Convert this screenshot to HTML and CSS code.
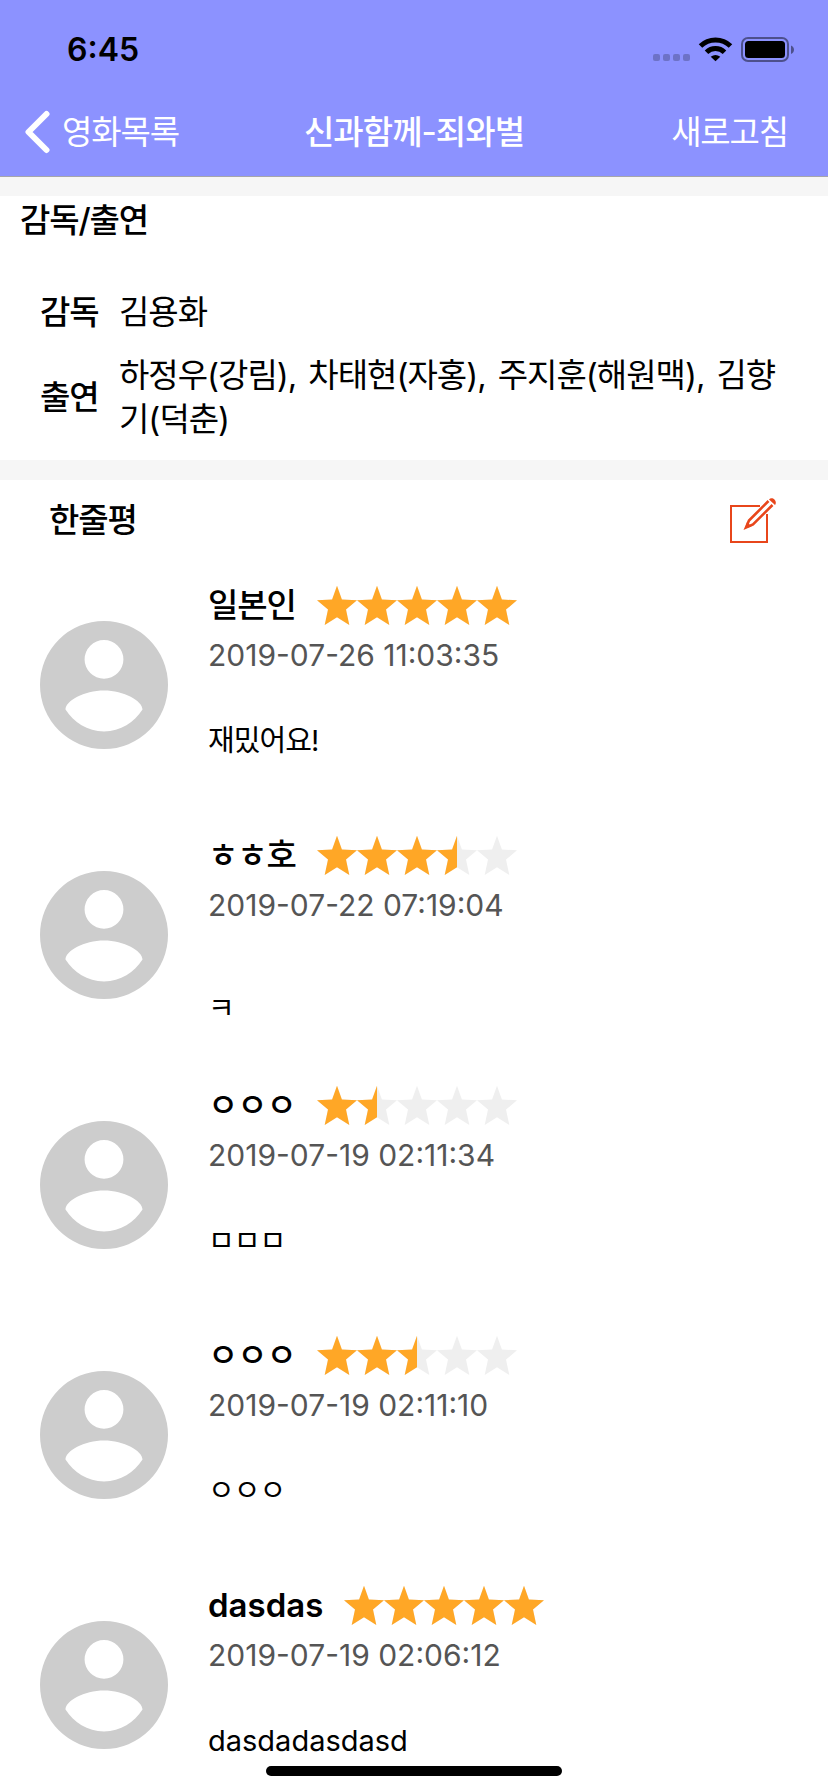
FILE: index.html
```
<!DOCTYPE html>
<html lang="ko">
<head>
<meta charset="utf-8">
<title>신과함께-죄와벌</title>
<link rel="stylesheet" href="styles.css">
</head>
<body>
<svg class="defs" width="0" height="0" aria-hidden="true">
  <defs>
    <path id="star" d="M20 .7 24.9 14.4 40 15.3 29 24.6 32.3 40 20 32.3 7.7 40 11 24.6 0 15.3 15.1 14.4Z"/>
    <g id="stars">
      <use href="#star"/><use href="#star" x="40"/><use href="#star" x="80"/><use href="#star" x="120"/><use href="#star" x="160"/>
    </g>
    <symbol id="person" viewBox="0 0 128 128">
      <path fill="#cdcdcd" fill-rule="evenodd" d="M64 0a64 64 0 1 1 0 128a64 64 0 1 1 0-128ZM64 19a19.4 19.4 0 1 0 0 38.800a19.400 19.400 0 1 0 0-38.800ZM64 69.500C44 69.500 25.500 80 25.500 88.500C33.500 101 47.500 110.500 64 110.500S94.500 101 102.500 88.500C102.500 80 84 69.500 64 69.500Z"/>
    </symbol>
  </defs>
</svg>
<div class="screen">
  <header class="top">
    <div class="status">
      <span class="clock">6:45</span>
      <svg class="indicators" width="142" height="26" viewBox="0 0 142 26">
        <g fill="#000" fill-opacity=".22"><rect y="17" width="7" height="7" rx="2"/><rect x="10" y="17" width="7" height="7" rx="2"/><rect x="20" y="17" width="7" height="7" rx="2"/><rect x="30" y="17" width="7" height="7" rx="2"/></g>
        <g fill="none" stroke="#000" stroke-width="5"><path d="M47.500 9A21.500 21.500 0 0 1 77.500 9"/><path d="M53.500 15.200A12.800 12.800 0 0 1 71.500 15.200"/></g>
        <path d="M57.700 19.800Q62.500 16 67.300 19.800L62.500 24.300Z"/>
        <rect x="89" y="1" width="46" height="23" rx="6" fill="none" stroke="#000" stroke-opacity=".45" stroke-width="2"/>
        <rect x="92" y="4" width="40" height="17" rx="3.500"/>
        <path fill-opacity=".45" d="M138 8.500C142 10 142 15.500 138 17Z"/>
      </svg>
    </div>
    <nav class="nav">
      <a class="back"><svg width="26" height="44" viewBox="0 0 26 44"><path d="M22.500 4 4.500 22 22.500 40" fill="none" stroke="#fff" stroke-width="6" stroke-linecap="round" stroke-linejoin="round"/></svg><span>영화목록</span></a>
      <h1 class="title">신과함께-죄와벌</h1>
      <a class="refresh">새로고침</a>
    </nav>
  </header>
  <main>
    <section class="cast">
      <h2 class="cast-title">감독/출연</h2>
      <dl class="credits">
        <dt>감독</dt><dd>김용화</dd>
        <dt>출연</dt><dd>하정우(강림), 차태현(자홍), 주지훈(해원맥), 김향기(덕춘)</dd>
      </dl>
    </section>
    <section class="reviews">
      <div class="reviews-head">
        <h2>한줄평</h2>
        <svg width="48" height="48" viewBox="0 0 48 48" fill="none" stroke="#e8461b">
          <path d="M31 10H2V46H38V18" stroke-width="2"/>
          <path d="M39.500 5 20 24.500 17 31.500 24 28.500 43.500 9" stroke-width="2.600"/>
          <path d="M16 32.500 18 26 22.500 30.500Z" fill="#e8461b" stroke="none"/>
          <path d="M40 3.500C43 0 49 5 46 9Z" fill="#e8461b" stroke="none"/>
        </svg>
      </div>
      <article class="review">
        <svg class="avatar"><use href="#person"/></svg>
        <div class="body">
          <div class="line"><h3>일본인</h3><svg class="rating"><use href="#stars" class="off"/><svg width="200"><use href="#stars" class="on"/></svg></svg></div>
          <time>2019-07-26 11:03:35</time>
          <p>재밌어요!</p>
        </div>
      </article>
      <article class="review">
        <svg class="avatar"><use href="#person"/></svg>
        <div class="body">
          <div class="line"><h3>ㅎㅎ호</h3><svg class="rating"><use href="#stars" class="off"/><svg width="140"><use href="#stars" class="on"/></svg></svg></div>
          <time>2019-07-22 07:19:04</time>
          <p><br>ㅋ</p>
        </div>
      </article>
      <article class="review">
        <svg class="avatar"><use href="#person"/></svg>
        <div class="body">
          <div class="line"><h3>ㅇㅇㅇ</h3><svg class="rating"><use href="#stars" class="off"/><svg width="60"><use href="#stars" class="on"/></svg></svg></div>
          <time>2019-07-19 02:11:34</time>
          <p>ㅁㅁㅁ</p>
        </div>
      </article>
      <article class="review">
        <svg class="avatar"><use href="#person"/></svg>
        <div class="body">
          <div class="line"><h3>ㅇㅇㅇ</h3><svg class="rating"><use href="#stars" class="off"/><svg width="100"><use href="#stars" class="on"/></svg></svg></div>
          <time>2019-07-19 02:11:10</time>
          <p>ㅇㅇㅇ</p>
        </div>
      </article>
      <article class="review">
        <svg class="avatar"><use href="#person"/></svg>
        <div class="body">
          <div class="line"><h3 class="latin">dasdas</h3><svg class="rating"><use href="#stars" class="off"/><svg width="200"><use href="#stars" class="on"/></svg></svg></div>
          <time>2019-07-19 02:06:12</time>
          <p class="latin">dasdadasdasd</p>
        </div>
      </article>
    </section>
  </main>
  <div class="home-bar"></div>
</div>
</body>
</html>
```
FILE: styles.css
```
* { box-sizing: border-box; margin: 0; padding: 0; }
body { background: #fff; color: #000; font-family: Inter, "Noto Sans CJK KR", sans-serif; }
.defs { position: absolute; }
.screen { position: relative; width: 828px; height: 1792px; overflow: hidden; font-size: 33px; letter-spacing: -1.15px; line-height: 44px; }
h1, h2, h3 { font-size: inherit; font-weight: 500; }

.top { height: 177px; background: #8c92ff; border-bottom: 1px solid #a5a5ab; }
.status { display: flex; justify-content: space-between; height: 88px; padding: 37px 33px 0 67px; }
.clock { font: 600 32px/25px Inter, sans-serif; letter-spacing: 0; }
.nav { display: grid; grid-template-columns: 1fr auto 1fr; align-items: center; height: 88px; padding: 0 24px; color: #fff; }
.back { display: flex; align-items: center; gap: 12px; }
.title { font-size: 33px; letter-spacing: -.95px; }
.refresh { justify-self: end; margin-right: 16px; }

.cast { height: 303px; border: solid #f6f6f6; border-width: 19px 0 20px; }
.cast-title { padding: 2px 0 0 20px; height: 72px; }
.credits { display: grid; grid-template-columns: 60px 1fr; grid-template-rows: 44px 88px; column-gap: 19px; row-gap: 19px; align-items: center; padding: 22px 40px 0; }
.credits dt { font-weight: 500; }
.credits dd { letter-spacing: -1px; word-spacing: 3.7px; }

.reviews-head { display: flex; justify-content: space-between; align-items: center; height: 80px; padding: 0 51px 0 49px; }
.review { display: flex; align-items: center; gap: 40px; height: 250px; padding-left: 40px; }
.avatar { width: 128px; height: 128px; }
.body { height: 250px; padding-top: 25px; }
.line { display: flex; align-items: center; gap: 21px; height: 40px; }
.rating { width: 200px; height: 40px; }
.off { fill: #efefef; }
.on { fill: #ffa726; }
.body time { display: block; margin-top: 12px; font: 400 30px/36px Inter, sans-serif; letter-spacing: 0; color: #555; }
.body p { display: flex; flex-direction: column; justify-content: center; height: 72px; margin-top: 32px; font-size: 29px; letter-spacing: -.9px; line-height: 36px; }
.body .latin { letter-spacing: 0; }
.body h3.latin { font-weight: 600; }

.home-bar { position: absolute; left: 266px; bottom: 16px; width: 296px; height: 10px; border-radius: 5px; background: #000; }
```
